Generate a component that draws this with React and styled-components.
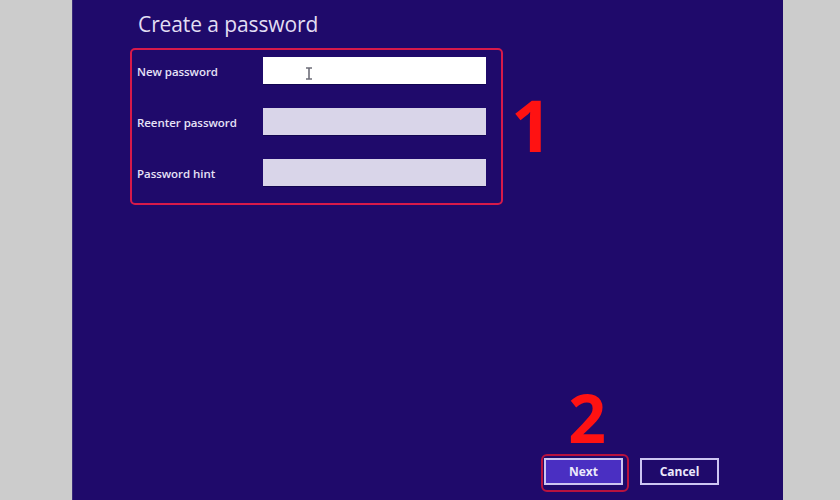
import React from "react";
import styled, { createGlobalStyle } from "styled-components";

const GlobalStyle = createGlobalStyle`
  html, body {
    margin: 0;
    padding: 0;
    background: #cccccc;
  }
  * {
    box-sizing: border-box;
  }
`;

const Screen = styled.div`
  display: flex;
  width: 840px;
  height: 500px;
  background: #cdcccf;
  overflow: hidden;
`;

const SideBar = styled.div`
  width: ${(props) => props.width}px;
  flex-shrink: 0;
  background: #cccccc;
`;

const Panel = styled.div`
  flex: 1;
  display: flex;
  flex-direction: column;
  background: #1f0a6b;
  border-left: 1px solid #3a2a7a;
  padding: 8px 64px 8px 57px;
  font-family: "Open Sans", "Noto Sans", sans-serif;
`;

const Title = styled.h1`
  margin: 0 0 8px 8px;
  font-size: 21px;
  font-weight: 400;
  line-height: 32px;
  color: #e2def3;
  letter-spacing: -0.1px;
`;

const FormRow = styled.div`
  display: flex;
  align-items: center;
  gap: 8px;
`;

const Highlight = styled.div`
  width: 373px;
  height: 157px;
  border: 2px solid #d81a4a;
  border-radius: 5px;
  padding: 7px 15px 0 5px;
  display: flex;
  flex-direction: column;
  gap: 23px;
`;

const Field = styled.div`
  display: flex;
  align-items: center;
  height: 28px;
`;

const Label = styled.label`
  width: 126px;
  font-size: 11.5px;
  font-weight: 600;
  color: #e6e2f7;
  letter-spacing: -0.05px;
`;

const Input = styled.div`
  position: relative;
  width: 223px;
  height: 28px;
  background: ${(props) => (props.active ? "#ffffff" : "#d9d5e9")};
  border-bottom: 1px solid #120550;
`;

const Cursor = styled.svg`
  position: absolute;
  left: 42px;
  top: 10px;
`;

const Marker = styled.span`
  font-family: "Open Sans", "Noto Sans", sans-serif;
  font-weight: 700;
  font-size: ${(props) => props.size}px;
  line-height: 1;
  color: #ff1212;
`;

const MarkerOne = styled(Marker)`
  margin-top: -6px;
`;

const Spacer = styled.div`
  flex: 1;
`;

const Footer = styled.div`
  display: flex;
  justify-content: flex-end;
  align-items: flex-end;
  gap: 11px;
`;

const NextGroup = styled.div`
  display: flex;
  flex-direction: column;
  align-items: center;
`;

const MarkerTwo = styled(Marker)`
  margin-bottom: 4px;
  margin-left: 4px;
`;

const RedRing = styled.div`
  border: 2px solid #b8123e;
  border-radius: 6px;
  padding: 2px 4px 5px 1px;
`;

const Button = styled.button`
  width: 79px;
  height: 27px;
  border: 2px solid #cdc6f2;
  background: ${(props) => (props.primary ? "#4a2fc2" : "#1f0a6b")};
  color: #ece9fb;
  font-family: "Open Sans", "Noto Sans", sans-serif;
  font-size: 12px;
  font-weight: 700;
  padding: 0;
  display: block;
`;

const CancelWrap = styled.div`
  padding-bottom: 7px;
`;

const fields = [
  { label: "New password", active: true },
  { label: "Reenter password" },
  { label: "Password hint" },
];

const App = () => {
  return (
    <>
      <GlobalStyle />
      <Screen>
        <SideBar width={72} />
        <Panel>
          <Title>Create a password</Title>
          <FormRow>
            <Highlight>
              {fields.map((f) => (
                <Field key={f.label}>
                  <Label>{f.label}</Label>
                  <Input active={f.active}>
                    {f.active && (
                      <Cursor width="8" height="13" viewBox="0 0 8 13">
                        <path
                          d="M1 1h6M1 12h6M4 1v11"
                          stroke="#6d6d78"
                          strokeWidth="1.6"
                          fill="none"
                        />
                      </Cursor>
                    )}
                  </Input>
                </Field>
              ))}
            </Highlight>
            <MarkerOne size={72}>1</MarkerOne>
          </FormRow>
          <Spacer />
          <Footer>
            <NextGroup>
              <MarkerTwo size={66}>2</MarkerTwo>
              <RedRing>
                <Button primary>Next</Button>
              </RedRing>
            </NextGroup>
            <CancelWrap>
              <Button>Cancel</Button>
            </CancelWrap>
          </Footer>
        </Panel>
        <SideBar width={57} />
      </Screen>
    </>
  );
};

export default App;
